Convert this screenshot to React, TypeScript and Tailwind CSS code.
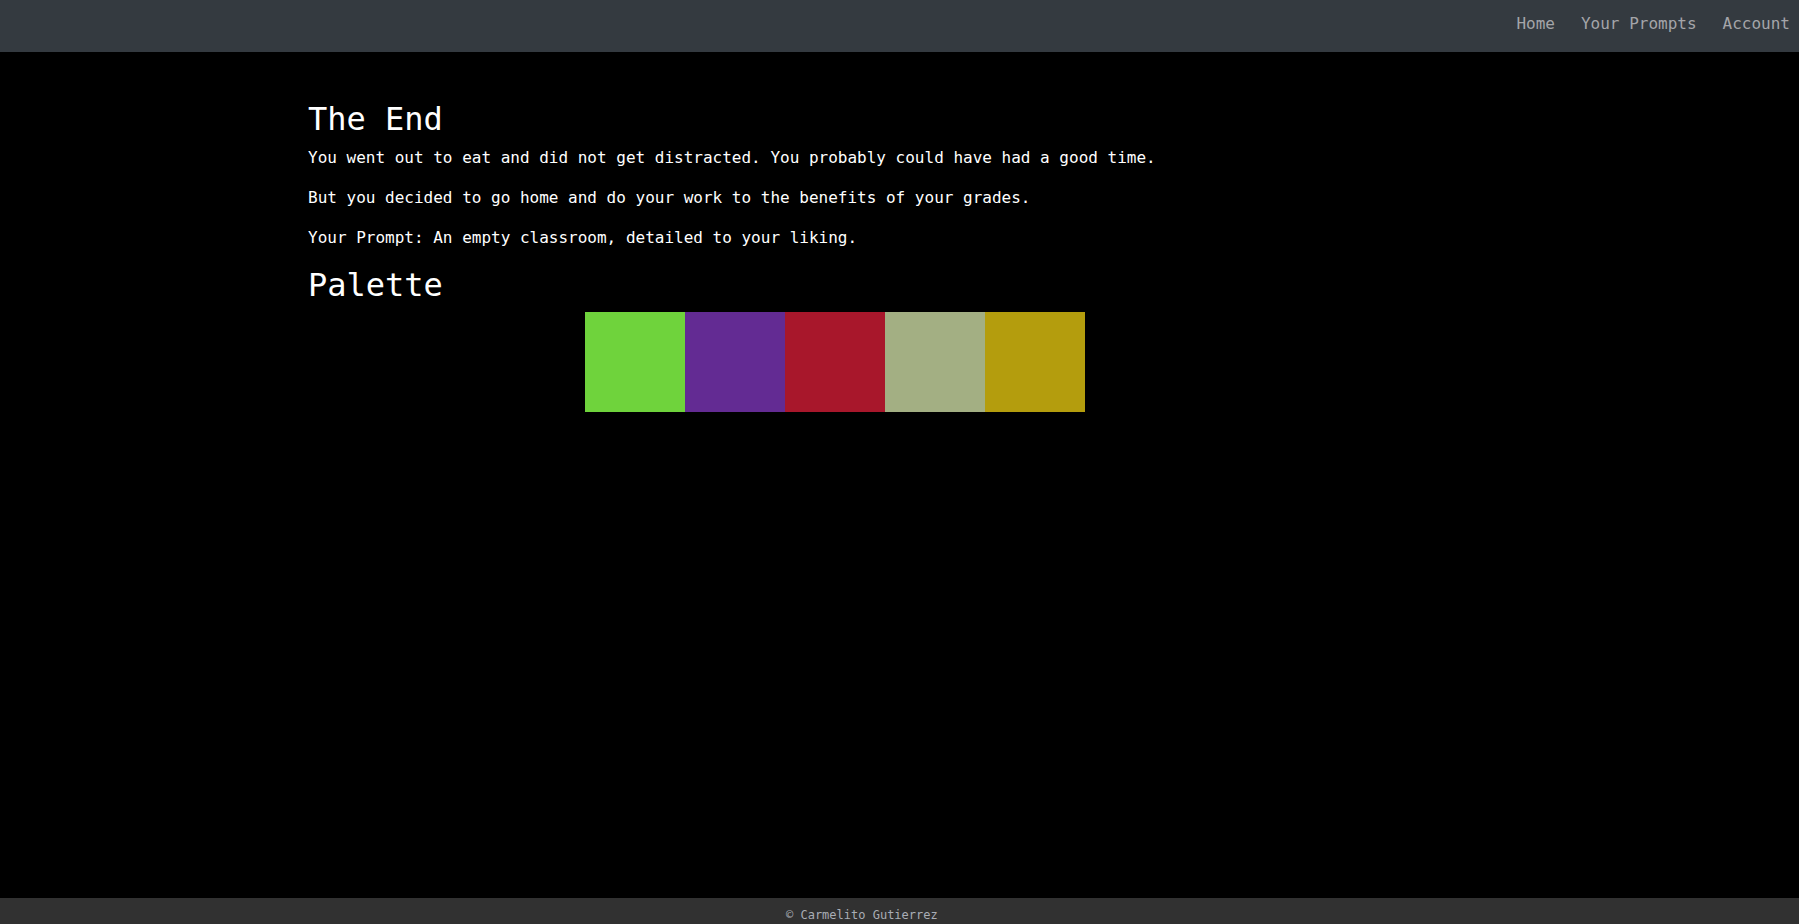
import React from "react";

const mono = { fontFamily: '"DejaVu Sans Mono", "Liberation Mono", monospace' };

const colors = ["#6fd33c", "#632b93", "#a8172b", "#a3af83", "#b49d0d"];

export default function App() {
  return (
    <div className="min-h-screen flex flex-col bg-black text-white" style={mono}>
      <nav className="h-[52px] bg-[#343a40] flex justify-end items-start pt-[12px] pr-[9px] gap-[26px] text-[16px] leading-[24px] text-[#a4a5a9]">
        <a href="#" className="block">Home</a>
        <a href="#" className="block">Your Prompts</a>
        <a href="#" className="block">Account</a>
      </nav>
      <main className="flex-1 pt-[48px] pl-[308px]">
        <div className="w-[1054px]">
          <h2 className="text-[32px] leading-[38px] mb-[8px] font-normal">The End</h2>
          <p className="text-[16px] leading-[24px] mb-[16px]">
            You went out to eat and did not get distracted. You probably could have had a good time.
          </p>
          <p className="text-[16px] leading-[24px] mb-[16px]">
            But you decided to go home and do your work to the benefits of your grades.
          </p>
          <p className="text-[16px] leading-[24px] mb-[16px]">
            Your Prompt: An empty classroom, detailed to your liking.
          </p>
          <h2 className="text-[32px] leading-[38px] mb-[8px] font-normal">Palette</h2>
          <div className="flex justify-center">
            {colors.map((c) => (
              <div key={c} className="w-[100px] h-[100px]" style={{ backgroundColor: c }} />
            ))}
          </div>
        </div>
      </main>
      <footer className="h-[26px] bg-[#313131] pt-[8px] pl-[786px] text-[12px] leading-[18px] text-[#a9adb5]">
        © Carmelito Gutierrez
      </footer>
    </div>
  );
}
